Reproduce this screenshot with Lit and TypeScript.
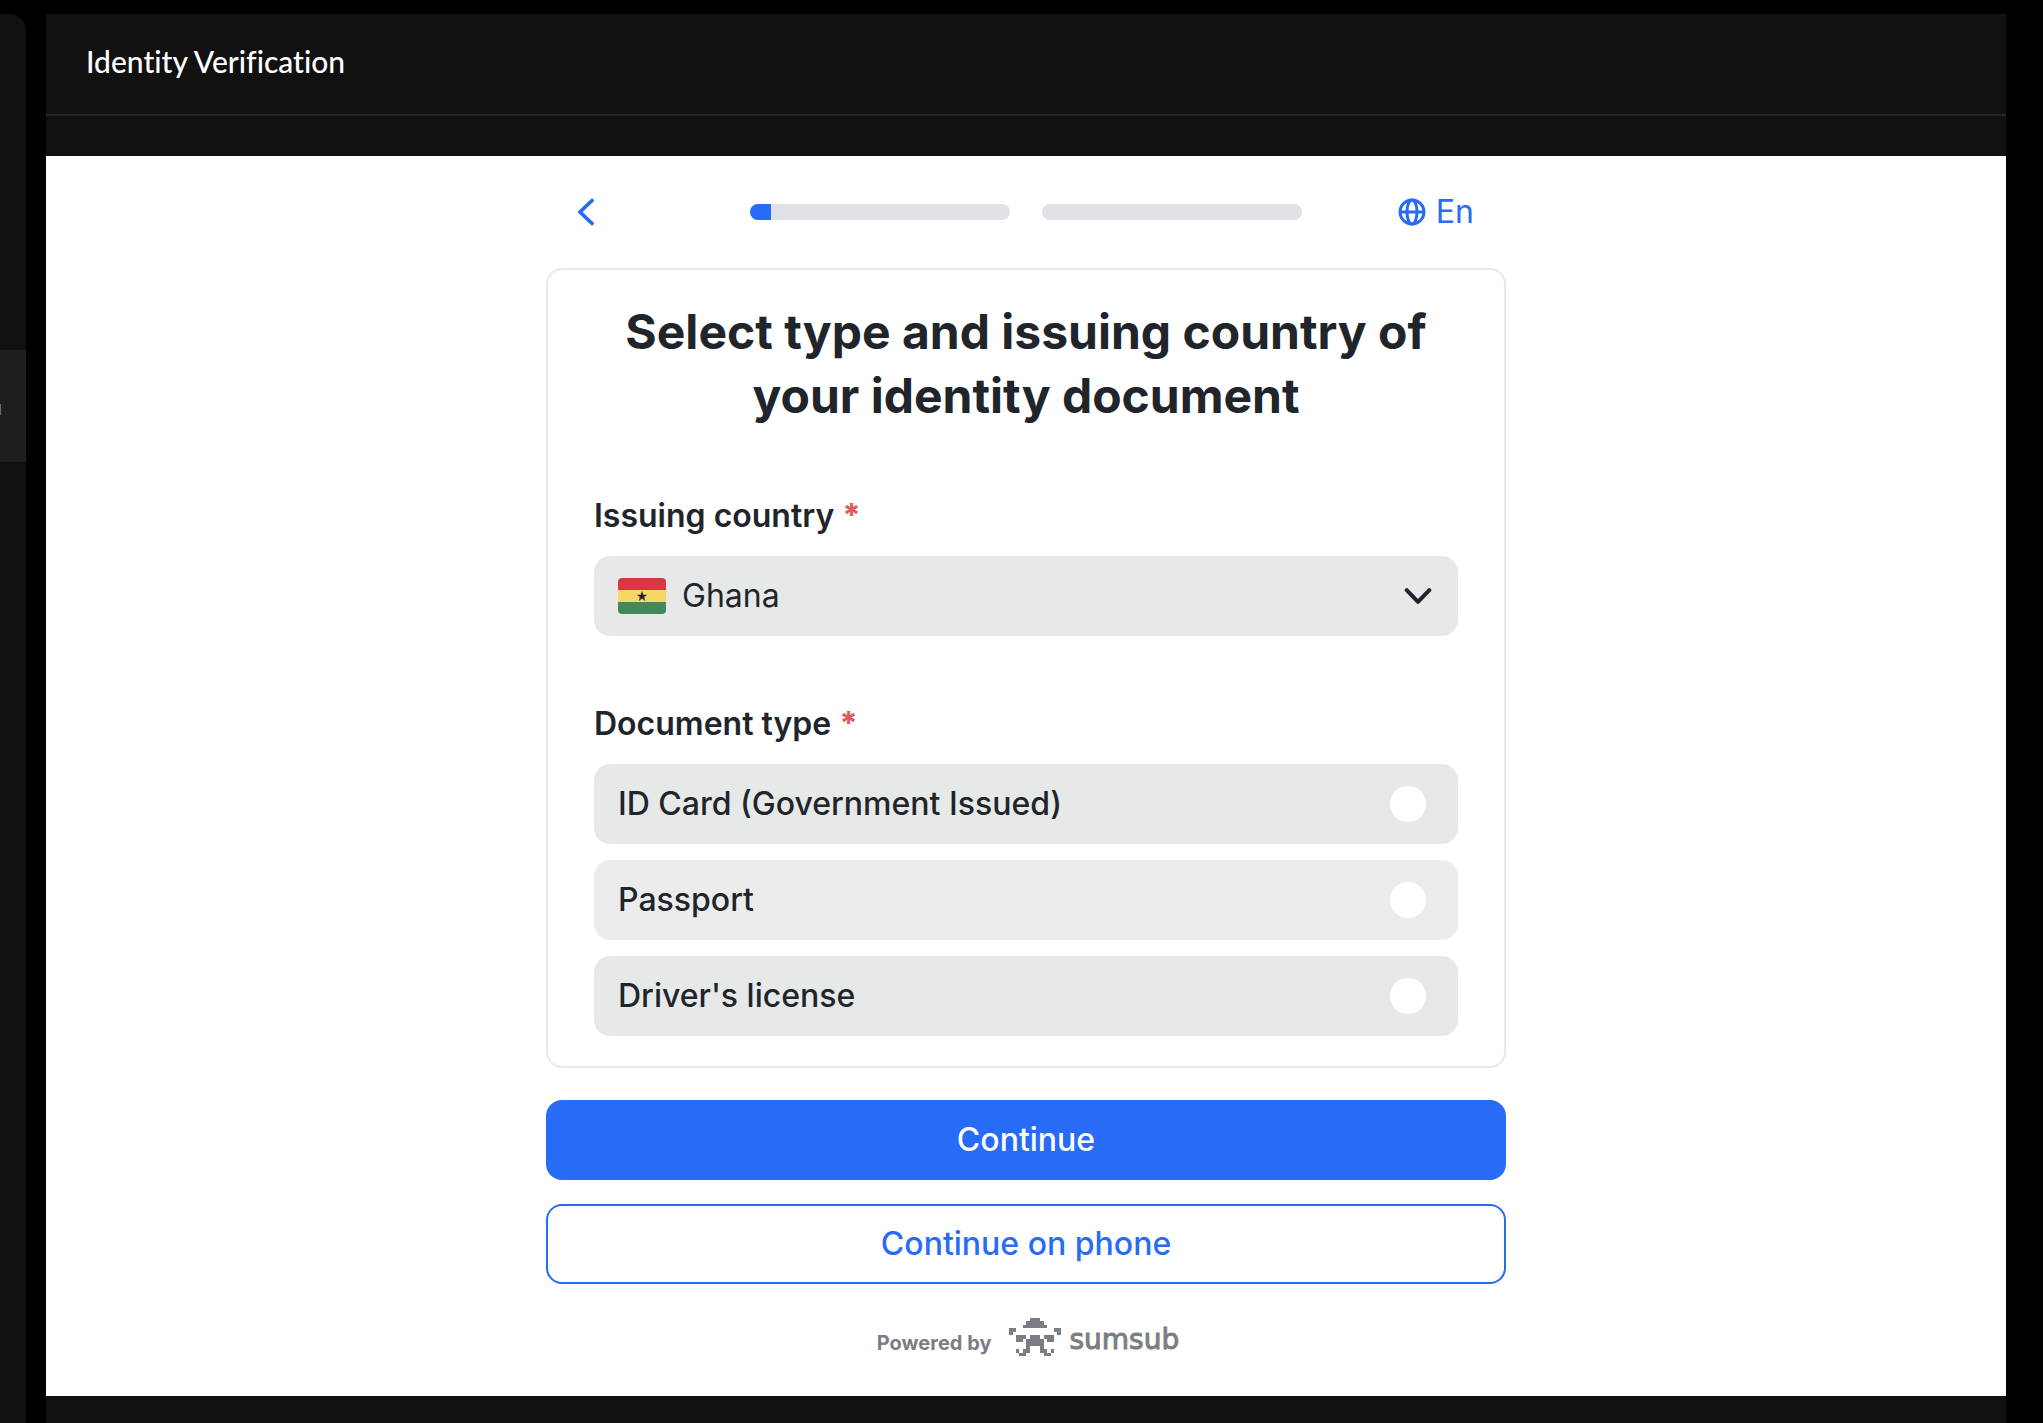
import { LitElement, html, css, svg } from "lit";
import { customElement, state } from "lit/decorators.js";

interface Option {
  id: string;
  label: string;
}

const DOCUMENTS: Option[] = [
  { id: "id-card", label: "ID Card (Government Issued)" },
  { id: "passport", label: "Passport" },
  { id: "license", label: "Driver's license" },
];

const STEPS = [8, 0];

// Pixel-art mascot: each entry is [row, first column, end column].
const MASCOT: [number, number, number][] = [
  [0, 6, 9],
  [1, 5, 10],
  [2, 4, 11],
  [3, 0, 2],
  [3, 13, 15],
  [4, 0, 1],
  [4, 14, 15],
  [5, 2, 5],
  [5, 6, 9],
  [5, 10, 13],
  [6, 2, 4],
  [6, 5, 10],
  [6, 11, 13],
  [7, 5, 10],
  [8, 5, 6],
  [8, 9, 10],
  [9, 2, 3],
  [9, 4, 6],
  [9, 9, 11],
  [9, 12, 13],
  [10, 3, 5],
  [10, 10, 12],
];

@customElement("app-root")
export class AppRoot extends LitElement {
  @state() private selected = "";

  static styles = css`
    :host {
      display: block;
      font-family: Inter, "Liberation Sans", sans-serif;
      font-size: 32px;
      line-height: 48px;
      color: #20252c;
    }
    * {
      box-sizing: border-box;
    }
    button,
    select {
      font: inherit;
      color: inherit;
      cursor: pointer;
    }
    .shell {
      display: flex;
      gap: 20px;
      min-height: 100vh;
      padding: 14px 37px 0 0;
      background: #000;
    }
    .rail {
      flex: none;
      width: 26px;
      padding-top: 336px;
      border-top-right-radius: 16px;
      background: #111;
    }
    .rail-item {
      display: flex;
      align-items: center;
      height: 112px;
      padding-top: 6px;
      background: #1e1e20;
    }
    .rail-mark {
      width: 1px;
      height: 11px;
      background: #6a6a6c;
    }
    .panel {
      flex: 1;
      min-width: 0;
      background: #111;
    }
    .panel-head {
      padding: 23px 40px 29px;
      margin-bottom: 40px;
      border-bottom: 2px solid #262626;
    }
    .panel-title {
      margin: 0;
      font-family: Lato, "Liberation Sans", sans-serif;
      font-size: 30px;
      line-height: 48px;
      font-weight: 500;
      font-variant-ligatures: none;
      color: #fff;
    }
    .sheet {
      background: #fff;
    }
    .flow {
      max-width: 960px;
      margin: 0 auto;
    }
    .nav {
      display: grid;
      grid-template-columns: 172px 1fr 172px;
      align-items: center;
      height: 112px;
      padding: 0 32px;
      color: #276bf7;
    }
    .back,
    .lang {
      display: flex;
      align-items: center;
      padding: 0;
      border: 0;
      background: none;
    }
    .back {
      justify-self: start;
    }
    .lang {
      justify-self: end;
      gap: 10px;
    }
    .steps {
      display: flex;
      gap: 32px;
    }
    .step {
      flex: 1;
      height: 16px;
      border-radius: 8px;
      overflow: hidden;
      background: #e0e1e6;
    }
    .step-fill {
      height: 100%;
      background: #276bf7;
    }
    .card {
      padding: 30px 46px;
      border: 2px solid #e9e9e9;
      border-radius: 16px;
    }
    .title {
      margin: 0 0 64px;
      font-size: 48px;
      line-height: 64px;
      font-weight: 700;
      text-align: center;
    }
    .label {
      display: block;
      margin-bottom: 16px;
      padding: 0;
      font-weight: 600;
    }
    .required {
      font-weight: 800;
      color: #e05c5c;
    }
    .picker {
      display: grid;
      align-items: center;
      margin-bottom: 64px;
    }
    .picker > * {
      grid-area: 1 / 1;
    }
    .select {
      appearance: none;
      width: 100%;
      height: 80px;
      padding: 0 88px;
      border: 0;
      border-radius: 16px;
      background: #e7e9e8;
    }
    .flag {
      margin-left: 24px;
      pointer-events: none;
    }
    .chevron {
      justify-self: end;
      margin-right: 26px;
      pointer-events: none;
    }
    .documents {
      margin: 0;
      padding: 0;
      border: 0;
    }
    .options {
      display: grid;
      gap: 16px;
    }
    .option {
      display: flex;
      align-items: center;
      justify-content: space-between;
      height: 80px;
      padding: 0 32px 0 24px;
      border-radius: 16px;
      background: #e7e9e8;
      font-weight: 500;
      cursor: pointer;
    }
    .option:nth-child(even) {
      background: #ececec;
    }
    .radio {
      appearance: none;
      width: 36px;
      height: 36px;
      margin: 0;
      border-radius: 50%;
      background: #fff;
    }
    .radio:checked {
      border: 10px solid #276bf7;
    }
    .actions {
      display: grid;
      gap: 24px;
      padding-top: 32px;
    }
    .button {
      height: 80px;
      border: 2px solid #276bf7;
      border-radius: 16px;
      background: #fff;
      color: #276bf7;
      font-weight: 500;
    }
    .primary {
      background: #276bf7;
      color: #fff;
    }
    .footer {
      display: flex;
      justify-content: center;
      align-items: center;
      gap: 18px;
      height: 112px;
      padding: 0 0 6px 4px;
      color: #7b7d82;
      font-size: 20px;
      font-weight: 700;
    }
    .powered {
      padding-top: 12px;
    }
    .brand {
      display: flex;
      align-items: center;
      gap: 8px;
      color: inherit;
      text-decoration: none;
    }
    .wordmark {
      padding-top: 6px;
      font-family: "DejaVu Sans", sans-serif;
      font-size: 28px;
      font-weight: 400;
      -webkit-text-stroke: 1px currentColor;
    }
    svg {
      display: block;
    }
  `;

  render() {
    return html`
      <div class="shell">
        <aside class="rail">
          <div class="rail-item"><span class="rail-mark"></span></div>
        </aside>
        <main class="panel">
          <header class="panel-head">
            <h1 class="panel-title">Identity Verification</h1>
          </header>
          <div class="sheet">
            <div class="flow">${this.nav()} ${this.form()} ${this.footer()}</div>
          </div>
        </main>
      </div>
    `;
  }

  private nav() {
    return html`
      <nav class="nav">
        <button class="back" type="button" aria-label="Back">
          <svg width="16" height="28" viewBox="0 0 16 28" fill="none" stroke="currentColor"
            stroke-width="3.8" stroke-linecap="round" stroke-linejoin="round">
            <path d="M14 2.5 2 14 14 25.5" />
          </svg>
        </button>
        <div class="steps">
          ${STEPS.map(
            (done) => html`<div class="step">
              <div class="step-fill" style="width:${done}%"></div>
            </div>`
          )}
        </div>
        <button class="lang" type="button">
          <svg width="28" height="28" viewBox="0 0 28 28" fill="none" stroke="currentColor" stroke-width="3">
            <circle cx="14" cy="14" r="12" />
            <ellipse cx="14" cy="14" rx="5" ry="12" />
            <path d="M2 14h24" />
          </svg>
          En
        </button>
      </nav>
    `;
  }

  private form() {
    return html`
      <form @submit=${(e: Event) => e.preventDefault()}>
        <div class="card">
          <h2 class="title">Select type and issuing country of your identity document</h2>
          <label class="label" for="country">Issuing country <span class="required">*</span></label>
          <div class="picker">
            <select class="select" id="country">
              <option>Ghana</option>
            </select>
            <svg class="flag" width="48" height="36" viewBox="0 0 48 36">
              <clipPath id="flag-clip"><rect width="48" height="36" rx="4" /></clipPath>
              <g clip-path="url(#flag-clip)">
                <path fill="#d8383f" d="M0 0h48v12H0z" />
                <path fill="#f8d664" d="M0 12h48v12H0z" />
                <path fill="#41895c" d="M0 24h48v12H0z" />
              </g>
              <path fill="#20252c"
                d="m24 13 1.3 3.7h3.9l-3.1 2.4 1.1 3.8-3.2-2.3-3.2 2.3 1.1-3.8-3.1-2.4h3.9z" />
            </svg>
            <svg class="chevron" width="28" height="18" viewBox="0 0 28 18" fill="none" stroke="currentColor"
              stroke-width="4" stroke-linecap="round" stroke-linejoin="round">
              <path d="M2.7 3.2 14 14.8 25.3 3.2" />
            </svg>
          </div>
          <fieldset class="documents">
            <legend class="label">Document type <span class="required">*</span></legend>
            <div class="options">
              ${DOCUMENTS.map(
                (doc) => html`<label class="option" for=${doc.id}>
                  ${doc.label}
                  <input class="radio" type="radio" name="document" id=${doc.id}
                    .checked=${this.selected === doc.id}
                    @change=${() => (this.selected = doc.id)} />
                </label>`
              )}
            </div>
          </fieldset>
        </div>
        <div class="actions">
          <button class="button primary" type="submit">Continue</button>
          <button class="button" type="button">Continue on phone</button>
        </div>
      </form>
    `;
  }

  private footer() {
    return html`
      <footer class="footer">
        <span class="powered">Powered by</span>
        <a class="brand" href="#">
          <svg width="52" height="38" viewBox="0 0 15 11" fill="currentColor" shape-rendering="crispEdges">
            ${MASCOT.map(
              ([row, from, to]) => svg`<rect x=${from} y=${row} width=${to - from} height="1" />`
            )}
          </svg>
          <span class="wordmark">sumsub</span>
        </a>
      </footer>
    `;
  }
}
